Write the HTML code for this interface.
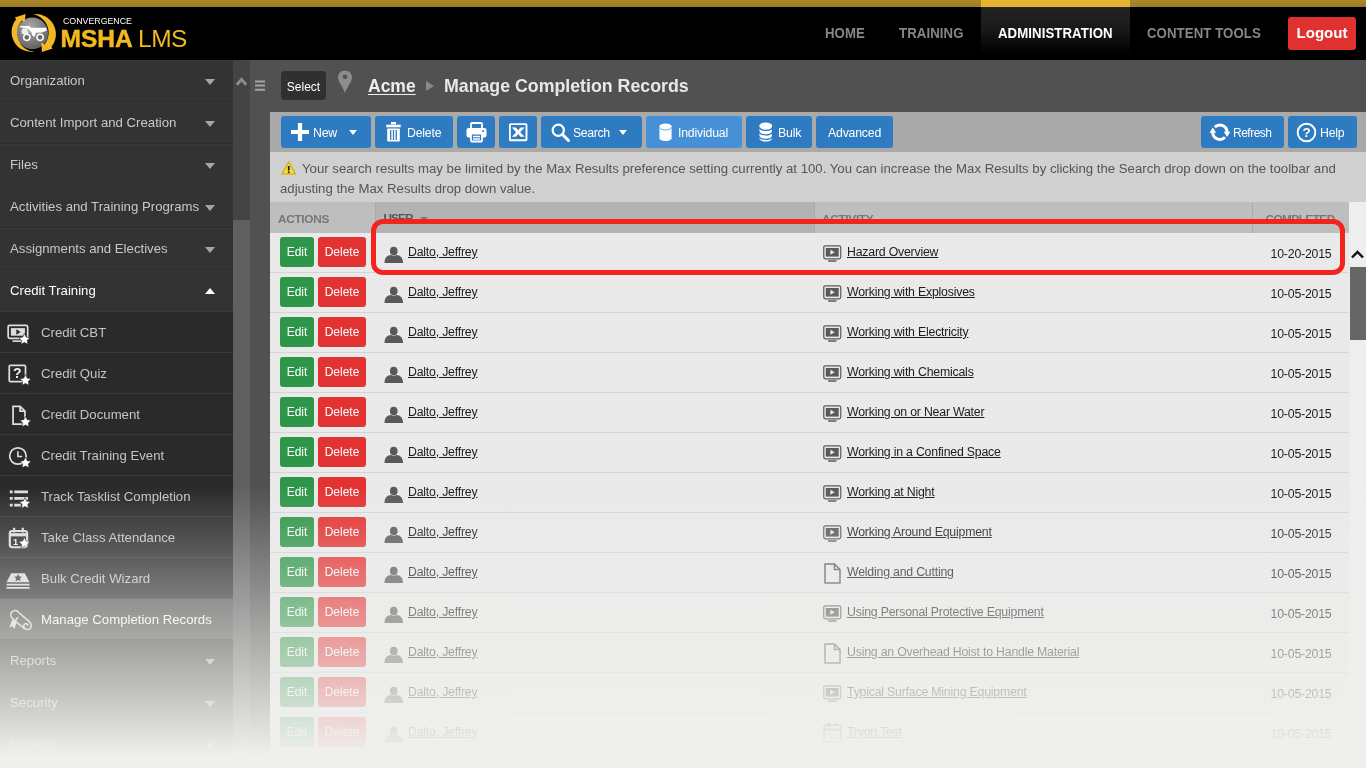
<!DOCTYPE html>
<html lang="en">
<head>
<meta charset="utf-8">
<title>Manage Completion Records - Convergence MSHA LMS</title>
<style>
*{box-sizing:border-box;margin:0;padding:0}
html,body{width:1366px;height:768px;overflow:hidden}
body{position:relative;background:#515151;font-family:"Liberation Sans",sans-serif;font-size:13.2px;color:#ccc}
.abs{position:absolute}
#gold{left:0;top:0;width:1366px;height:7px;background:linear-gradient(#ab8829,#9c7c24)}
#goldact{left:981px;top:0;width:149px;height:7px;background:#e5b32f}
#hdr{left:0;top:7px;width:1366px;height:53px;background:#000}
#tabact{left:981px;top:7px;width:149px;height:53px;background:linear-gradient(#232323 0,#1a1a1a 40%,#000 88%)}
.nav{top:25px;font-size:14.5px;font-weight:bold;color:#868686;letter-spacing:0.1px;transform:scaleX(0.91);transform-origin:0 0;white-space:nowrap;line-height:16px}
#logout{left:1288px;top:17px;width:68px;height:33px;background:#e03131;border-radius:3px;color:#fff;font-weight:bold;font-size:15px;text-align:center;line-height:32px}
#side{left:0;top:60px;width:233px;height:708px;background:#333}
.mi{left:0;width:233px;height:42px;border-top:1px solid #2d2d2d;box-shadow:inset 0 1px 0 #383838;line-height:42px;padding-left:10px;color:#c8c8c8;white-space:nowrap}
.mi .ar{position:absolute;left:204.5px;top:19px;width:0;height:0;border-left:5px solid transparent;border-right:5px solid transparent;border-top:6px solid #a6a6a6}
.mi.open{color:#fff}
.mi.open .ar{border-top:0;border-bottom:6px solid #fff;top:18px}
.si{left:0;width:233px;height:41px;background:#2a2a2a;border-top:1px solid #3a3a3a;line-height:41px;padding-left:41px;color:#c4c4c4;white-space:nowrap}
.si.sel{background:#4d4d4d;color:#fff}
.si svg{position:absolute;left:6px;top:8px}
#sstrip{left:233px;top:60px;width:17px;height:708px;background:#606060}
#sthumb{left:233px;top:60px;width:17px;height:160px;background:#444}
#panel{left:270px;top:112px;width:1096px;height:656px;background:#ededed}
#tbar{left:270px;top:112px;width:1096px;height:40px;background:#a9a9a9}
.tb{top:116px;height:32px;background:#2f7bc2;border-radius:3px;color:#fff;font-size:12.3px;letter-spacing:-0.2px;line-height:34.5px;white-space:nowrap}
.tb.on{background:#4690d8}
.tb span{position:absolute;top:0}
#msg{left:270px;top:152px;width:1096px;height:50px;background:#d0d0d0;color:#555;font-size:13.2px;line-height:20px;padding:7px 0 0 10px}
#thead{left:270px;top:202px;width:1079px;height:31px;background:#bebebe}
.th{top:202px;height:31px;font-size:11.8px;letter-spacing:-0.3px;font-weight:bold;color:#777;line-height:34px;white-space:nowrap}
.row{left:270px;width:1079px;height:40px;border-bottom:1px solid #d4d4d4;background:repeating-linear-gradient(135deg,#ededed 0,#ededed 1.5px,#e6e6e6 1.5px,#e6e6e6 2.83px)}
.eb{left:10px;top:4px;width:34px;height:30px;background:#2e9648;border-radius:3px;color:#fff;font-size:12px;text-align:center;line-height:30px}
.db{left:48px;top:4px;width:48px;height:30px;background:#e33232;border-radius:3px;color:#fff;font-size:12px;text-align:center;line-height:30px}
.un,.an{top:0;line-height:39px;font-size:12.3px;letter-spacing:-0.2px;color:#1c1c1c;text-decoration:underline;white-space:nowrap}
.un{left:138px}.an{left:577px}
.dt{top:2px;right:17.5px;line-height:39px;font-size:12.3px;letter-spacing:-0.2px;color:#1c1c1c;white-space:nowrap}
#vsb{left:1349px;top:202px;width:17px;height:566px;background:#eee}
#vth{left:1350px;top:267px;width:16px;height:73px;background:#666}
#fade{left:0;top:486px;width:1366px;height:282px;background:linear-gradient(rgba(239,239,237,0) 0,rgba(239,239,237,1) 270px)}
#hl{left:371px;top:218.5px;width:974px;height:56px;border:5px solid #f4231d;border-radius:12px}
#app{position:absolute;left:0;top:0;width:1366px;height:768px;overflow:hidden;will-change:transform}
</style>
</head>
<body>
<div id="app">
<div class="abs" id="gold"></div><div class="abs" id="goldact"></div>
<div class="abs" id="hdr"></div><div class="abs" id="tabact"></div>

<svg class="abs" style="left:0;top:0" width="70" height="60" viewBox="0 0 70 60">
<defs><radialGradient id="lg" cx="0.42" cy="0.3" r="0.75"><stop offset="0" stop-color="#a9a9a9"/><stop offset="1" stop-color="#5e5e5e"/></radialGradient></defs>
<circle cx="32.3" cy="33.4" r="15.8" fill="url(#lg)"/>
<path id="cres" d="M34.3 51.8A20 20 0 0 1 16.2 19.2L14.8 17.6 25.6 14 24.7 22.3 21.8 20.6A18.8 18.8 0 0 0 34.3 51.8Z" fill="#f0b823"/>
<path d="M33.2 14.3A20 20 0 0 1 51.3 46.9L52.7 48.5 41.9 52.1 41.3 42.2 44.5 44.5A18.8 18.8 0 0 0 33.2 14.3Z" fill="#f0b823"/>
<path d="M19.8 26h9.5l1.7 1.8h15.5v3l-4.5 1.7-6 .3-1.5 3.7h-1.5l-2-4.5-3-3-8-2z" fill="#fff"/>
<path d="M22.5 28.5h4.5l1.5 4-.5 1.5h-6l-.5-3z" fill="#eee"/>
<circle cx="26.8" cy="37.3" r="3.1" fill="#6a6a6a" stroke="#fff" stroke-width="1.5"/>
<circle cx="40.1" cy="37.3" r="3.1" fill="#6a6a6a" stroke="#fff" stroke-width="1.5"/>
</svg>
<div class="abs" style="left:63px;top:15px;font-size:8.8px;color:#fff;line-height:12px">CONVERGENCE</div>
<div class="abs" style="left:60.5px;top:23.5px;font-size:24.5px;font-weight:bold;color:#f2b91e;line-height:30px;-webkit-text-stroke:0.5px #f2b91e">MSHA</div>
<div class="abs" style="left:138px;top:23.5px;font-size:24.5px;color:#f2b91e;line-height:30px;letter-spacing:-0.5px">LMS</div>

<div class="abs nav" style="left:825px">HOME</div>
<div class="abs nav" style="left:899px">TRAINING</div>
<div class="abs nav" style="left:998px;color:#fff">ADMINISTRATION</div>
<div class="abs nav" style="left:1147px">CONTENT TOOLS</div>
<div class="abs" id="logout">Logout</div>
<div class="abs" id="side"></div>
<div class="abs mi" style="top:59px;border-top-color:#000">Organization<i class="ar"></i></div>
<div class="abs mi" style="top:101px">Content Import and Creation<i class="ar"></i></div>
<div class="abs mi" style="top:143px">Files<i class="ar"></i></div>
<div class="abs mi" style="top:185px">Activities and Training Programs<i class="ar"></i></div>
<div class="abs mi" style="top:227px">Assignments and Electives<i class="ar"></i></div>
<div class="abs mi open" style="top:269px">Credit Training<i class="ar"></i></div>
<div class="abs si" style="top:311px"><svg width="26" height="26" viewBox="0 0 24 24"><rect x="2" y="5" width="18" height="12" rx="1.5" fill="none" stroke="#ddd" stroke-width="1.6"/><rect x="4.5" y="7.5" width="13" height="7" fill="#ddd"/><path d="M9.5 8.5l4 2.5-4 2.5z" fill="#2a2a2a"/><path d="M6 19.5h10" stroke="#ddd" stroke-width="1.5"/><path d="M17 12.5l1.6 3.3 3.6 .5-2.6 2.5 .6 3.6-3.2-1.7-3.2 1.7 .6-3.6-2.6-2.5 3.6-.5z" fill="#fff" stroke="#2a2a2a" stroke-width="0.6"/></svg>Credit CBT</div>
<div class="abs si" style="top:352px"><svg width="26" height="26" viewBox="0 0 24 24"><rect x="3" y="4" width="15" height="15" rx="1" fill="none" stroke="#ddd" stroke-width="1.6"/><text x="10.5" y="16" font-size="13" font-weight="bold" fill="#eee" text-anchor="middle" font-family="Liberation Sans,sans-serif">?</text><path d="M18 12.5l1.6 3.3 3.6 .5-2.6 2.5 .6 3.6-3.2-1.7-3.2 1.7 .6-3.6-2.6-2.5 3.6-.5z" fill="#fff" stroke="#2a2a2a" stroke-width="0.6"/></svg>Credit Quiz</div>
<div class="abs si" style="top:393px"><svg width="26" height="26" viewBox="0 0 24 24"><path d="M6.5 4h6.5l4.5 4.5v12h-11z M13 4v4.5h4.5" fill="none" stroke="#ddd" stroke-width="1.6"/><path d="M18 13l1.6 3.3 3.6 .5-2.6 2.5 .6 3.6-3.2-1.7-3.2 1.7 .6-3.6-2.6-2.5 3.6-.5z" fill="#fff" stroke="#2a2a2a" stroke-width="0.6"/></svg>Credit Document</div>
<div class="abs si" style="top:434px"><svg width="26" height="26" viewBox="0 0 24 24"><circle cx="11" cy="12" r="7.6" fill="none" stroke="#ddd" stroke-width="1.6"/><path d="M11 7.5v5h4" fill="none" stroke="#ddd" stroke-width="1.5"/><path d="M18 13l1.6 3.3 3.6 .5-2.6 2.5 .6 3.6-3.2-1.7-3.2 1.7 .6-3.6-2.6-2.5 3.6-.5z" fill="#fff" stroke="#2a2a2a" stroke-width="0.6"/></svg>Credit Training Event</div>
<div class="abs si" style="top:475px"><svg width="26" height="26" viewBox="0 0 24 24"><path d="M3.5 7.3h2.7M7.6 7.3h12.7M3.5 13.3h2.7M7.6 13.3h12.7M3.5 19.5h2.7M7.6 19.5h6" stroke="#ddd" stroke-width="2.7" fill="none"/><path d="M17.5 12.5l1.6 3.3 3.6 .5-2.6 2.5 .6 3.6-3.2-1.7-3.2 1.7 .6-3.6-2.6-2.5 3.6-.5z" fill="#fff" stroke="#2a2a2a" stroke-width="0.6"/></svg>Track Tasklist Completion</div>
<div class="abs si" style="top:516px"><svg width="26" height="26" viewBox="0 0 24 24"><rect x="3.5" y="5.5" width="16" height="15" rx="2.2" fill="none" stroke="#ddd" stroke-width="2"/><path d="M3.5 9h16" stroke="#ddd" stroke-width="3"/><path d="M7.5 2.5v4.5M15.5 2.5v4.5" stroke="#ddd" stroke-width="2"/><text x="8.8" y="18" font-size="8.5" font-weight="bold" fill="#eee" text-anchor="middle" font-family="Liberation Sans,sans-serif">1</text><path d="M17 11.5l1.6 3.3 3.6 .5-2.6 2.5 .6 3.6-3.2-1.7-3.2 1.7 .6-3.6-2.6-2.5 3.6-.5z" fill="#fff" stroke="#2a2a2a" stroke-width="0.6"/></svg>Take Class Attendance</div>
<div class="abs si" style="top:557px"><svg width="26" height="26" viewBox="0 0 24 24"><path d="M4.8 6.6h12.6l4.3 8.5h-21.2z" fill="#ddd"/><path d="M11.1 7.3l1.1 2.3 2.5.3-1.8 1.7.5 2.5-2.3-1.2-2.3 1.2.5-2.5-1.8-1.7 2.5-.3z" fill="#333"/><path d="M0.5 17.2h21.2M0.5 20.2h21.2" stroke="#ddd" stroke-width="1.8"/></svg>Bulk Credit Wizard</div>
<div class="abs si sel" style="top:598px"><svg width="26" height="26" viewBox="0 0 24 24"><path d="M5.5 4.5c2-1.8 4.5-1.5 6 .3l10 8.7c2.2 2 2.3 4.8.8 6.3s-4 1.3-5.3-.2s-.6-3.6 1-4.1s2.7.9 2 2" fill="none" stroke="#ddd" stroke-width="1.4"/><path d="M11 9.5l-2.5 3.5 8.5 7" fill="none" stroke="#ddd" stroke-width="1.4"/><path d="M5.5 4.5c-1.5 1.5-1.5 4 0 5.5l3 3" fill="none" stroke="#ddd" stroke-width="1.4"/><path d="M5.8 11.5l-2.8 7.5 3-1.3 1.7 2.8 2.3-7z" fill="#ddd"/></svg>Manage Completion Records</div>
<div class="abs mi" style="top:639px">Reports<i class="ar"></i></div>
<div class="abs mi" style="top:681px">Security<i class="ar"></i></div>
<div class="abs mi" style="top:723px">System<i class="ar"></i></div>

<div class="abs" id="sstrip"></div><div class="abs" id="sthumb"></div>

<svg class="abs" style="left:235px;top:75px" width="13" height="12" viewBox="0 0 13 12"><path d="M1.8 9.8l4.7-5.4 4.7 5.4" fill="none" stroke="#8c8c8c" stroke-width="2.9"/></svg>
<svg class="abs" style="left:255px;top:80px" width="10" height="12" viewBox="0 0 10 12"><path d="M0 1.5h10M0 5.6h10M0 9.7h10" stroke="#a4a4a4" stroke-width="2"/></svg>
<div class="abs" style="left:281px;top:71px;width:45px;height:29px;background:#303030;border-radius:4px;color:#fff;font-size:12px;text-align:center;line-height:33px">Select</div>
<svg class="abs" style="left:337px;top:70.3px" width="16" height="24" viewBox="0 0 16 24"><path d="M8 0.5C3.8 0.5 1 3.6 1 7.3c0 4.7 5 9.7 7 15.7 2-6 7-11 7-15.7C15 3.6 12.2 0.5 8 0.5z" fill="#8c8c8c"/><circle cx="8" cy="6.8" r="2.3" fill="#525252"/></svg>
<div class="abs" style="left:368px;top:74px;font-size:17.5px;font-weight:bold;color:#eee;line-height:24px;text-decoration:underline;text-underline-offset:1.5px;text-decoration-thickness:1.2px;white-space:nowrap">Acme</div>
<i class="abs" style="left:426px;top:81px;width:0;height:0;border-top:5.5px solid transparent;border-bottom:5.5px solid transparent;border-left:8px solid #8a8a8a"></i>
<div class="abs" style="left:444px;top:74px;font-size:17.75px;font-weight:bold;color:#e8e8e8;line-height:24px;white-space:nowrap">Manage Completion Records</div>

<div class="abs" id="panel"></div>
<div class="abs" id="tbar"></div>
<div class="abs tb" style="left:281px;width:90px"><svg style="position:absolute;left:10px;top:7px" width="18" height="18" viewBox="0 0 18 18"><path d="M9 0v18M0 9h18" stroke="#fff" stroke-width="4.2"/></svg><span style="left:32px">New</span><i style="position:absolute;left:67.5px;top:14px;width:0;height:0;border-left:4.5px solid transparent;border-right:4.5px solid transparent;border-top:5px solid #fff"></i></div>
<div class="abs tb" style="left:375px;width:78px"><svg style="position:absolute;left:10.5px;top:4.8px" width="15" height="21" viewBox="0 0 15 21"><path d="M5 2.2h5" stroke="#fff" stroke-width="2.4" fill="none"/><path d="M0.3 5h14.4" stroke="#fff" stroke-width="2.6" fill="none"/><rect x="1.2" y="7.5" width="12.6" height="13" rx="0.8" fill="#fff"/><path d="M4.7 9v10M7.5 9v10M10.3 9v10" stroke="#2f7bc2" stroke-width="1.3"/></svg><span style="left:32px">Delete</span></div>
<div class="abs tb" style="left:457px;width:38px"><svg style="position:absolute;left:9px;top:6px" width="21" height="21" viewBox="0 0 21 21"><rect x="5" y="1" width="11" height="6" rx="1" fill="none" stroke="#fff" stroke-width="1.8"/><rect x="0.5" y="6" width="20" height="9.5" rx="2.2" fill="#fff"/><rect x="5" y="11.5" width="11" height="8" rx="0.8" fill="#2f7bc2" stroke="#fff" stroke-width="1.8"/><path d="M7 14.5h7M7 17h7" stroke="#fff" stroke-width="1.3"/><circle cx="17" cy="9" r="1" fill="#2f7bc2"/></svg></div>
<div class="abs tb" style="left:499px;width:38px"><svg style="position:absolute;left:9px;top:7px" width="20" height="19" viewBox="0 0 20 19"><rect x="1.9" y="1.1" width="16.6" height="16.2" rx="0.8" fill="none" stroke="#fff" stroke-width="1.9"/><path d="M3.8 4.6h4.1l2.3 2.7 2.3-2.7h4.1l-4.4 4.6 4.4 4.6h-4.1l-2.3-2.7-2.3 2.7h-4.1l4.4-4.6z" fill="#fff"/></svg></div>
<div class="abs tb" style="left:541px;width:101px"><svg style="position:absolute;left:10px;top:7px" width="19" height="19" viewBox="0 0 19 19"><circle cx="7.3" cy="7.3" r="5.6" fill="none" stroke="#fff" stroke-width="2.2"/><path d="M11.5 11.5l6 6" stroke="#fff" stroke-width="3" stroke-linecap="round"/></svg><span style="left:32px;letter-spacing:-0.35px">Search</span><i style="position:absolute;left:78px;top:14px;width:0;height:0;border-left:4.5px solid transparent;border-right:4.5px solid transparent;border-top:5px solid #fff"></i></div>
<div class="abs tb on" style="left:646px;width:96px"><svg style="position:absolute;left:12.8px;top:6.8px" width="13" height="18.5" viewBox="0 0 15 20" preserveAspectRatio="none"><path d="M0.5 3.5v13c0 1.7 3 3 7 3s7-1.3 7-3v-13z" fill="#fff"/><ellipse cx="7.5" cy="3.5" rx="7" ry="3" fill="#fff" stroke="#4690d8" stroke-width="0"/><path d="M0.5 4.5c0 1.7 3 3 7 3s7-1.3 7-3" fill="none" stroke="#4690d8" stroke-width="0.9"/></svg><span style="left:32px">Individual</span></div>
<div class="abs tb" style="left:746px;width:66px"><svg style="position:absolute;left:12.5px;top:6px" width="13.5" height="20" viewBox="0 0 15 20" preserveAspectRatio="none"><path d="M0.5 3.5v13c0 1.7 3 3 7 3s7-1.3 7-3v-13z" fill="#fff"/><ellipse cx="7.5" cy="3.5" rx="7" ry="3" fill="#fff"/><path d="M0.5 5.3c0 1.7 3 3 7 3s7-1.3 7-3M0.5 9.8c0 1.7 3 3 7 3s7-1.3 7-3M0.5 14.3c0 1.7 3 3 7 3s7-1.3 7-3" fill="none" stroke="#2f7bc2" stroke-width="1.3"/></svg><span style="left:32px">Bulk</span></div>
<div class="abs tb" style="left:816px;width:77px"><span style="left:12px">Advanced</span></div>
<div class="abs tb" style="left:1201px;width:83px"><svg style="position:absolute;left:8px;top:6px" width="22" height="20" viewBox="0 0 22 20"><path d="M5.84 5.14A7.15 7.15 0 0 1 18.05 10.2M15.96 15.26A7.15 7.15 0 0 1 3.75 10.2" fill="none" stroke="#fff" stroke-width="3"/><path d="M14.8 9.7h6.6l-3.3 5.2zM0.5 10.7h6.6l-3.3-5.2z" fill="#fff"/></svg><span style="left:32px;font-size:12px;letter-spacing:-0.5px">Refresh</span></div>
<div class="abs tb" style="left:1288px;width:69px"><svg style="position:absolute;left:8px;top:6px" width="21" height="21" viewBox="0 0 21 21"><circle cx="10.5" cy="10.5" r="8.8" fill="none" stroke="#fff" stroke-width="1.9"/><text x="10.5" y="15.3" font-size="13.5" font-weight="bold" fill="#fff" text-anchor="middle" font-family="Liberation Sans,sans-serif">?</text></svg><span style="left:32px">Help</span></div>

<div class="abs" id="msg">&nbsp;&nbsp;&nbsp;&nbsp;&nbsp;&nbsp;Your search results may be limited by the Max Results preference setting currently at 100. You can increase the Max Results by clicking the Search drop down on the toolbar and<br>adjusting the Max Results drop down value.</div>
<svg class="abs" style="left:280.5px;top:160.5px" width="15.5" height="14" viewBox="0 0 15 14" preserveAspectRatio="none"><path d="M7.5 1l6.5 12h-13z" fill="#f5dc3c" stroke="#c9a800" stroke-width="1" stroke-linejoin="round"/><path d="M7.5 5v4.5" stroke="#222" stroke-width="1.7"/><circle cx="7.5" cy="11.2" r="0.95" fill="#222"/></svg>
<div class="abs" id="thead"></div>

<div class="abs" style="left:375px;top:202px;width:440px;height:31px;background:#b3b3b3;border-left:1px solid #aaa"></div>
<div class="abs" style="left:814px;top:202px;width:1px;height:31px;background:#ababab"></div>
<div class="abs" style="left:1252px;top:202px;width:1px;height:31px;background:#ababab"></div>
<div class="abs th" style="left:278px">ACTIONS</div>
<div class="abs th" style="left:383.5px;margin-top:-1px;color:#555;letter-spacing:-0.9px">USER</div>
<i class="abs" style="left:420px;top:217px;width:0;height:0;border-left:4px solid transparent;border-right:4px solid transparent;border-top:4px solid #777"></i>
<div class="abs th" style="left:822px">ACTIVITY</div>
<div class="abs th" style="left:1265.5px;letter-spacing:-0.55px">COMPLETED</div>

<div class="abs row" style="top:233px"><div class="abs eb">Edit</div><div class="abs db">Delete</div><svg class="abs" style="left:113.7px;top:12.5px" width="19.5" height="18" viewBox="0 0 20 18"><ellipse cx="10" cy="5" rx="3.9" ry="4.5" fill="#595959"/><path d="M0.5 17.3c0-5.5 2.8-8 6.5-8.3l3 1 3-1c3.7.3 6.5 2.8 6.5 8.3z" fill="#595959"/></svg><div class="abs un">Dalto, Jeffrey</div><svg class="abs" style="left:553px;top:12px" width="18.5" height="17" viewBox="0 0 20 17" preserveAspectRatio="none"><rect x="0.8" y="0.8" width="18.4" height="13" rx="1.8" fill="none" stroke="#5a5a5a" stroke-width="1.3"/><rect x="3" y="3" width="14" height="8.6" fill="#5a5a5a"/><path d="M8 4.8l4.5 2.5-4.5 2.5z" fill="#eee"/><path d="M5.5 16h9" stroke="#5a5a5a" stroke-width="1.5"/></svg><div class="abs an">Hazard Overview</div><div class="abs dt">10-20-2015</div></div>
<div class="abs row" style="top:273px"><div class="abs eb">Edit</div><div class="abs db">Delete</div><svg class="abs" style="left:113.7px;top:12.5px" width="19.5" height="18" viewBox="0 0 20 18"><ellipse cx="10" cy="5" rx="3.9" ry="4.5" fill="#595959"/><path d="M0.5 17.3c0-5.5 2.8-8 6.5-8.3l3 1 3-1c3.7.3 6.5 2.8 6.5 8.3z" fill="#595959"/></svg><div class="abs un">Dalto, Jeffrey</div><svg class="abs" style="left:553px;top:12px" width="18.5" height="17" viewBox="0 0 20 17" preserveAspectRatio="none"><rect x="0.8" y="0.8" width="18.4" height="13" rx="1.8" fill="none" stroke="#5a5a5a" stroke-width="1.3"/><rect x="3" y="3" width="14" height="8.6" fill="#5a5a5a"/><path d="M8 4.8l4.5 2.5-4.5 2.5z" fill="#eee"/><path d="M5.5 16h9" stroke="#5a5a5a" stroke-width="1.5"/></svg><div class="abs an">Working with Explosives</div><div class="abs dt">10-05-2015</div></div>
<div class="abs row" style="top:313px"><div class="abs eb">Edit</div><div class="abs db">Delete</div><svg class="abs" style="left:113.7px;top:12.5px" width="19.5" height="18" viewBox="0 0 20 18"><ellipse cx="10" cy="5" rx="3.9" ry="4.5" fill="#595959"/><path d="M0.5 17.3c0-5.5 2.8-8 6.5-8.3l3 1 3-1c3.7.3 6.5 2.8 6.5 8.3z" fill="#595959"/></svg><div class="abs un">Dalto, Jeffrey</div><svg class="abs" style="left:553px;top:12px" width="18.5" height="17" viewBox="0 0 20 17" preserveAspectRatio="none"><rect x="0.8" y="0.8" width="18.4" height="13" rx="1.8" fill="none" stroke="#5a5a5a" stroke-width="1.3"/><rect x="3" y="3" width="14" height="8.6" fill="#5a5a5a"/><path d="M8 4.8l4.5 2.5-4.5 2.5z" fill="#eee"/><path d="M5.5 16h9" stroke="#5a5a5a" stroke-width="1.5"/></svg><div class="abs an">Working with Electricity</div><div class="abs dt">10-05-2015</div></div>
<div class="abs row" style="top:353px"><div class="abs eb">Edit</div><div class="abs db">Delete</div><svg class="abs" style="left:113.7px;top:12.5px" width="19.5" height="18" viewBox="0 0 20 18"><ellipse cx="10" cy="5" rx="3.9" ry="4.5" fill="#595959"/><path d="M0.5 17.3c0-5.5 2.8-8 6.5-8.3l3 1 3-1c3.7.3 6.5 2.8 6.5 8.3z" fill="#595959"/></svg><div class="abs un">Dalto, Jeffrey</div><svg class="abs" style="left:553px;top:12px" width="18.5" height="17" viewBox="0 0 20 17" preserveAspectRatio="none"><rect x="0.8" y="0.8" width="18.4" height="13" rx="1.8" fill="none" stroke="#5a5a5a" stroke-width="1.3"/><rect x="3" y="3" width="14" height="8.6" fill="#5a5a5a"/><path d="M8 4.8l4.5 2.5-4.5 2.5z" fill="#eee"/><path d="M5.5 16h9" stroke="#5a5a5a" stroke-width="1.5"/></svg><div class="abs an">Working with Chemicals</div><div class="abs dt">10-05-2015</div></div>
<div class="abs row" style="top:393px"><div class="abs eb">Edit</div><div class="abs db">Delete</div><svg class="abs" style="left:113.7px;top:12.5px" width="19.5" height="18" viewBox="0 0 20 18"><ellipse cx="10" cy="5" rx="3.9" ry="4.5" fill="#595959"/><path d="M0.5 17.3c0-5.5 2.8-8 6.5-8.3l3 1 3-1c3.7.3 6.5 2.8 6.5 8.3z" fill="#595959"/></svg><div class="abs un">Dalto, Jeffrey</div><svg class="abs" style="left:553px;top:12px" width="18.5" height="17" viewBox="0 0 20 17" preserveAspectRatio="none"><rect x="0.8" y="0.8" width="18.4" height="13" rx="1.8" fill="none" stroke="#5a5a5a" stroke-width="1.3"/><rect x="3" y="3" width="14" height="8.6" fill="#5a5a5a"/><path d="M8 4.8l4.5 2.5-4.5 2.5z" fill="#eee"/><path d="M5.5 16h9" stroke="#5a5a5a" stroke-width="1.5"/></svg><div class="abs an">Working on or Near Water</div><div class="abs dt">10-05-2015</div></div>
<div class="abs row" style="top:433px"><div class="abs eb">Edit</div><div class="abs db">Delete</div><svg class="abs" style="left:113.7px;top:12.5px" width="19.5" height="18" viewBox="0 0 20 18"><ellipse cx="10" cy="5" rx="3.9" ry="4.5" fill="#595959"/><path d="M0.5 17.3c0-5.5 2.8-8 6.5-8.3l3 1 3-1c3.7.3 6.5 2.8 6.5 8.3z" fill="#595959"/></svg><div class="abs un">Dalto, Jeffrey</div><svg class="abs" style="left:553px;top:12px" width="18.5" height="17" viewBox="0 0 20 17" preserveAspectRatio="none"><rect x="0.8" y="0.8" width="18.4" height="13" rx="1.8" fill="none" stroke="#5a5a5a" stroke-width="1.3"/><rect x="3" y="3" width="14" height="8.6" fill="#5a5a5a"/><path d="M8 4.8l4.5 2.5-4.5 2.5z" fill="#eee"/><path d="M5.5 16h9" stroke="#5a5a5a" stroke-width="1.5"/></svg><div class="abs an">Working in a Confined Space</div><div class="abs dt">10-05-2015</div></div>
<div class="abs row" style="top:473px"><div class="abs eb">Edit</div><div class="abs db">Delete</div><svg class="abs" style="left:113.7px;top:12.5px" width="19.5" height="18" viewBox="0 0 20 18"><ellipse cx="10" cy="5" rx="3.9" ry="4.5" fill="#595959"/><path d="M0.5 17.3c0-5.5 2.8-8 6.5-8.3l3 1 3-1c3.7.3 6.5 2.8 6.5 8.3z" fill="#595959"/></svg><div class="abs un">Dalto, Jeffrey</div><svg class="abs" style="left:553px;top:12px" width="18.5" height="17" viewBox="0 0 20 17" preserveAspectRatio="none"><rect x="0.8" y="0.8" width="18.4" height="13" rx="1.8" fill="none" stroke="#5a5a5a" stroke-width="1.3"/><rect x="3" y="3" width="14" height="8.6" fill="#5a5a5a"/><path d="M8 4.8l4.5 2.5-4.5 2.5z" fill="#eee"/><path d="M5.5 16h9" stroke="#5a5a5a" stroke-width="1.5"/></svg><div class="abs an">Working at Night</div><div class="abs dt">10-05-2015</div></div>
<div class="abs row" style="top:513px"><div class="abs eb">Edit</div><div class="abs db">Delete</div><svg class="abs" style="left:113.7px;top:12.5px" width="19.5" height="18" viewBox="0 0 20 18"><ellipse cx="10" cy="5" rx="3.9" ry="4.5" fill="#595959"/><path d="M0.5 17.3c0-5.5 2.8-8 6.5-8.3l3 1 3-1c3.7.3 6.5 2.8 6.5 8.3z" fill="#595959"/></svg><div class="abs un">Dalto, Jeffrey</div><svg class="abs" style="left:553px;top:12px" width="18.5" height="17" viewBox="0 0 20 17" preserveAspectRatio="none"><rect x="0.8" y="0.8" width="18.4" height="13" rx="1.8" fill="none" stroke="#5a5a5a" stroke-width="1.3"/><rect x="3" y="3" width="14" height="8.6" fill="#5a5a5a"/><path d="M8 4.8l4.5 2.5-4.5 2.5z" fill="#eee"/><path d="M5.5 16h9" stroke="#5a5a5a" stroke-width="1.5"/></svg><div class="abs an">Working Around Equipment</div><div class="abs dt">10-05-2015</div></div>
<div class="abs row" style="top:553px"><div class="abs eb">Edit</div><div class="abs db">Delete</div><svg class="abs" style="left:113.7px;top:12.5px" width="19.5" height="18" viewBox="0 0 20 18"><ellipse cx="10" cy="5" rx="3.9" ry="4.5" fill="#595959"/><path d="M0.5 17.3c0-5.5 2.8-8 6.5-8.3l3 1 3-1c3.7.3 6.5 2.8 6.5 8.3z" fill="#595959"/></svg><div class="abs un">Dalto, Jeffrey</div><svg class="abs" style="left:554px;top:10px" width="17" height="21" viewBox="0 0 17 21"><path d="M1 1h9.5l5.5 5.5v13.5h-15z" fill="none" stroke="#5a5a5a" stroke-width="1.5"/><path d="M10.5 1v5.5h5.5" fill="none" stroke="#5a5a5a" stroke-width="1.5"/></svg><div class="abs an">Welding and Cutting</div><div class="abs dt">10-05-2015</div></div>
<div class="abs row" style="top:593px"><div class="abs eb">Edit</div><div class="abs db">Delete</div><svg class="abs" style="left:113.7px;top:12.5px" width="19.5" height="18" viewBox="0 0 20 18"><ellipse cx="10" cy="5" rx="3.9" ry="4.5" fill="#595959"/><path d="M0.5 17.3c0-5.5 2.8-8 6.5-8.3l3 1 3-1c3.7.3 6.5 2.8 6.5 8.3z" fill="#595959"/></svg><div class="abs un">Dalto, Jeffrey</div><svg class="abs" style="left:553px;top:12px" width="18.5" height="17" viewBox="0 0 20 17" preserveAspectRatio="none"><rect x="0.8" y="0.8" width="18.4" height="13" rx="1.8" fill="none" stroke="#5a5a5a" stroke-width="1.3"/><rect x="3" y="3" width="14" height="8.6" fill="#5a5a5a"/><path d="M8 4.8l4.5 2.5-4.5 2.5z" fill="#eee"/><path d="M5.5 16h9" stroke="#5a5a5a" stroke-width="1.5"/></svg><div class="abs an">Using Personal Protective Equipment</div><div class="abs dt">10-05-2015</div></div>
<div class="abs row" style="top:633px"><div class="abs eb">Edit</div><div class="abs db">Delete</div><svg class="abs" style="left:113.7px;top:12.5px" width="19.5" height="18" viewBox="0 0 20 18"><ellipse cx="10" cy="5" rx="3.9" ry="4.5" fill="#595959"/><path d="M0.5 17.3c0-5.5 2.8-8 6.5-8.3l3 1 3-1c3.7.3 6.5 2.8 6.5 8.3z" fill="#595959"/></svg><div class="abs un">Dalto, Jeffrey</div><svg class="abs" style="left:554px;top:10px" width="17" height="21" viewBox="0 0 17 21"><path d="M1 1h9.5l5.5 5.5v13.5h-15z" fill="none" stroke="#5a5a5a" stroke-width="1.5"/><path d="M10.5 1v5.5h5.5" fill="none" stroke="#5a5a5a" stroke-width="1.5"/></svg><div class="abs an">Using an Overhead Hoist to Handle Material</div><div class="abs dt">10-05-2015</div></div>
<div class="abs row" style="top:673px"><div class="abs eb">Edit</div><div class="abs db">Delete</div><svg class="abs" style="left:113.7px;top:12.5px" width="19.5" height="18" viewBox="0 0 20 18"><ellipse cx="10" cy="5" rx="3.9" ry="4.5" fill="#595959"/><path d="M0.5 17.3c0-5.5 2.8-8 6.5-8.3l3 1 3-1c3.7.3 6.5 2.8 6.5 8.3z" fill="#595959"/></svg><div class="abs un">Dalto, Jeffrey</div><svg class="abs" style="left:553px;top:12px" width="18.5" height="17" viewBox="0 0 20 17" preserveAspectRatio="none"><rect x="0.8" y="0.8" width="18.4" height="13" rx="1.8" fill="none" stroke="#5a5a5a" stroke-width="1.3"/><rect x="3" y="3" width="14" height="8.6" fill="#5a5a5a"/><path d="M8 4.8l4.5 2.5-4.5 2.5z" fill="#eee"/><path d="M5.5 16h9" stroke="#5a5a5a" stroke-width="1.5"/></svg><div class="abs an">Typical Surface Mining Equipment</div><div class="abs dt">10-05-2015</div></div>
<div class="abs row" style="top:713px"><div class="abs eb">Edit</div><div class="abs db">Delete</div><svg class="abs" style="left:113.7px;top:12.5px" width="19.5" height="18" viewBox="0 0 20 18"><ellipse cx="10" cy="5" rx="3.9" ry="4.5" fill="#595959"/><path d="M0.5 17.3c0-5.5 2.8-8 6.5-8.3l3 1 3-1c3.7.3 6.5 2.8 6.5 8.3z" fill="#595959"/></svg><div class="abs un">Dalto, Jeffrey</div><svg class="abs" style="left:553px;top:9px" width="19" height="21" viewBox="0 0 19 21"><rect x="1" y="3" width="17" height="17" rx="2" fill="none" stroke="#5a5a5a" stroke-width="1.5"/><path d="M1 7.5h17" stroke="#5a5a5a" stroke-width="2"/><path d="M5.5 0.5v4M13.5 0.5v4" stroke="#5a5a5a" stroke-width="1.6"/><text x="9.5" y="17" font-size="8" font-weight="bold" fill="#5a5a5a" text-anchor="middle" font-family="Liberation Sans,sans-serif">12</text></svg><div class="abs an">Tryon Test</div><div class="abs dt">10-05-2015</div></div>
<div class="abs row" style="top:753px"><div class="abs eb">Edit</div><div class="abs db">Delete</div><svg class="abs" style="left:113.7px;top:12.5px" width="19.5" height="18" viewBox="0 0 20 18"><ellipse cx="10" cy="5" rx="3.9" ry="4.5" fill="#595959"/><path d="M0.5 17.3c0-5.5 2.8-8 6.5-8.3l3 1 3-1c3.7.3 6.5 2.8 6.5 8.3z" fill="#595959"/></svg><div class="abs un">Dalto, Jeffrey</div><svg class="abs" style="left:553px;top:12px" width="18.5" height="17" viewBox="0 0 20 17" preserveAspectRatio="none"><rect x="0.8" y="0.8" width="18.4" height="13" rx="1.8" fill="none" stroke="#5a5a5a" stroke-width="1.3"/><rect x="3" y="3" width="14" height="8.6" fill="#5a5a5a"/><path d="M8 4.8l4.5 2.5-4.5 2.5z" fill="#eee"/><path d="M5.5 16h9" stroke="#5a5a5a" stroke-width="1.5"/></svg><div class="abs an">Truck Safety</div><div class="abs dt">10-05-2015</div></div>

<div class="abs" id="vsb"></div><div class="abs" id="vth"></div>
<svg class="abs" style="left:1350px;top:248px" width="15" height="12" viewBox="0 0 15 12"><path d="M2 9.5l5.5-5.5 5.5 5.5" fill="none" stroke="#111" stroke-width="2.4"/></svg>
<div class="abs" id="fade"></div>
<div class="abs" id="hl"></div>
</div>
</body>
</html>
